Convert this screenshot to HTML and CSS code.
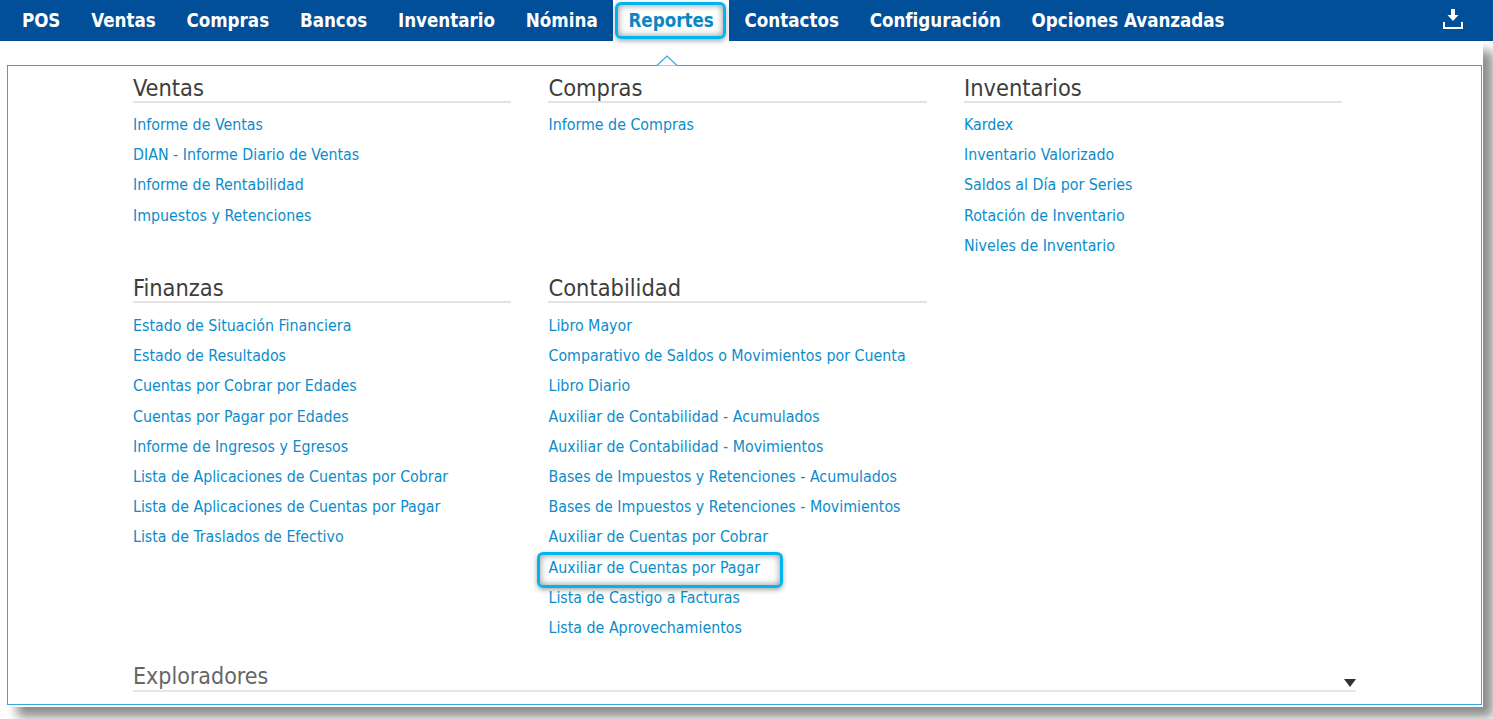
FILE: index.html
```html
<!DOCTYPE html>
<html lang="es">
<head>
<meta charset="utf-8">
<title>Reportes</title>
<link rel="stylesheet" href="styles.css">
</head>
<body>
<nav class="nav">
  <a class="nav-item">POS</a>
  <a class="nav-item">Ventas</a>
  <a class="nav-item">Compras</a>
  <a class="nav-item">Bancos</a>
  <a class="nav-item">Inventario</a>
  <a class="nav-item">Nómina</a>
  <a class="nav-item nav-active">Reportes<span class="nav-mark"></span></a>
  <a class="nav-item">Contactos</a>
  <a class="nav-item">Configuración</a>
  <a class="nav-item">Opciones Avanzadas</a>
  <svg class="nav-download" width="20" height="21" viewBox="0 0 20 21"><path d="M8 0h4v6h3.500L10 12 4.500 6H8z" fill="#fff"/><path d="M1 13v6h18v-6" fill="none" stroke="#fff" stroke-width="2"/></svg>
</nav>
<div class="sheet">
  <main class="panel">
    <svg class="panel-arrow" width="24" height="11" viewBox="0 0 24 11"><path d="M0 10.500 H2 L12 1 L22 10.500 H24" fill="#fff" stroke="#36a5e0" stroke-width="1.200"/></svg>
    <div class="grid">
      <section class="group">
        <h2 class="group-title">Ventas</h2>
        <ul class="links">
          <li>Informe de Ventas</li>
          <li>DIAN - Informe Diario de Ventas</li>
          <li>Informe de Rentabilidad</li>
          <li>Impuestos y Retenciones</li>
        </ul>
      </section>
      <section class="group">
        <h2 class="group-title">Compras</h2>
        <ul class="links">
          <li>Informe de Compras</li>
        </ul>
      </section>
      <section class="group">
        <h2 class="group-title">Inventarios</h2>
        <ul class="links">
          <li>Kardex</li>
          <li>Inventario Valorizado</li>
          <li>Saldos al Día por Series</li>
          <li>Rotación de Inventario</li>
          <li>Niveles de Inventario</li>
        </ul>
      </section>
      <section class="group">
        <h2 class="group-title">Finanzas</h2>
        <ul class="links">
          <li>Estado de Situación Financiera</li>
          <li>Estado de Resultados</li>
          <li>Cuentas por Cobrar por Edades</li>
          <li>Cuentas por Pagar por Edades</li>
          <li>Informe de Ingresos y Egresos</li>
          <li>Lista de Aplicaciones de Cuentas por Cobrar</li>
          <li>Lista de Aplicaciones de Cuentas por Pagar</li>
          <li>Lista de Traslados de Efectivo</li>
        </ul>
      </section>
      <section class="group">
        <h2 class="group-title">Contabilidad</h2>
        <ul class="links">
          <li>Libro Mayor</li>
          <li>Comparativo de Saldos o Movimientos por Cuenta</li>
          <li>Libro Diario</li>
          <li>Auxiliar de Contabilidad - Acumulados</li>
          <li>Auxiliar de Contabilidad - Movimientos</li>
          <li>Bases de Impuestos y Retenciones - Acumulados</li>
          <li>Bases de Impuestos y Retenciones - Movimientos</li>
          <li>Auxiliar de Cuentas por Cobrar</li>
          <li class="link-marked">Auxiliar de Cuentas por Pagar<span class="link-mark"></span></li>
          <li>Lista de Castigo a Facturas</li>
          <li>Lista de Aprovechamientos</li>
        </ul>
      </section>
    </div>
    <section class="explorers">
      <h2 class="explorers-title">Exploradores</h2>
      <span class="caret"></span>
    </section>
  </main>
</div>
</body>
</html>
```
FILE: styles.css
```css
* { box-sizing: border-box; }
html, body { margin: 0; height: 719px; overflow: hidden; background: #fff; }
body { font-family: "DejaVu Sans Condensed", "DejaVu Sans", sans-serif; font-stretch: condensed; }

.nav { display: flex; align-items: stretch; height: 41px; padding-left: 6.500px; background: #004f98; }
.nav-item { position: relative; display: flex; align-items: center; padding: 0 15.400px; color: #fff; font-size: 18.600px; font-weight: 700; white-space: nowrap; }
.nav-active { background: #fff; color: #0b86c4; }
.nav-mark { position: absolute; left: 2px; right: 3px; top: 2px; bottom: 2px; border: 3px solid #00b4ef; border-radius: 6px; box-shadow: 0 2px 5px rgba(0,0,0,.35), inset 0 0 7px rgba(0,0,0,.45); }
.nav-download { margin: 9px 30px 0 auto; }

.sheet { margin: 0 10px 0 7px; height: 666px; padding: 24px 1px 2px 0; background: #fff; box-shadow: 10px 10px 10px rgba(0,0,0,.45); }
.panel { position: relative; height: 640px; padding: 10px 125px 0; border: 1px solid #36a5e0; }
.panel-arrow { position: absolute; left: 646.500px; top: -11px; }

.grid { display: grid; grid-template-columns: repeat(3, 378.300px); column-gap: 37.200px; grid-template-rows: 200px 386px; }
.group-title { margin: -2px 0 0; height: 29px; border-bottom: 2px solid #e6e2e2; color: #3d3d3d; font-size: 23.400px; font-weight: 400; line-height: 29px; }
.links { margin: 7px 0 0; padding: 0; list-style: none; color: #0b8ccb; font-size: 15.820px; line-height: 30.200px; }
.group:nth-child(n+4) .links { margin-top: 8px; }
.link-marked { position: relative; }
.link-mark { position: absolute; left: -11px; top: -1px; width: 246px; height: 36px; border: 3px solid #00b4ef; border-radius: 6px; box-shadow: 0 2px 5px rgba(0,0,0,.35), inset 0 0 7px rgba(0,0,0,.45); }

.explorers { position: relative; width: 1223px; margin-top: 0; }
.explorers-title { margin: 0; height: 30px; border-bottom: 2px solid #ebe5e5; color: #666; font-size: 23px; font-weight: 400; line-height: 29px; }
.caret { position: absolute; right: 0; top: 17px; border-style: solid; border-width: 8px 6.500px 0; border-color: #2e3436 transparent transparent; }
```
